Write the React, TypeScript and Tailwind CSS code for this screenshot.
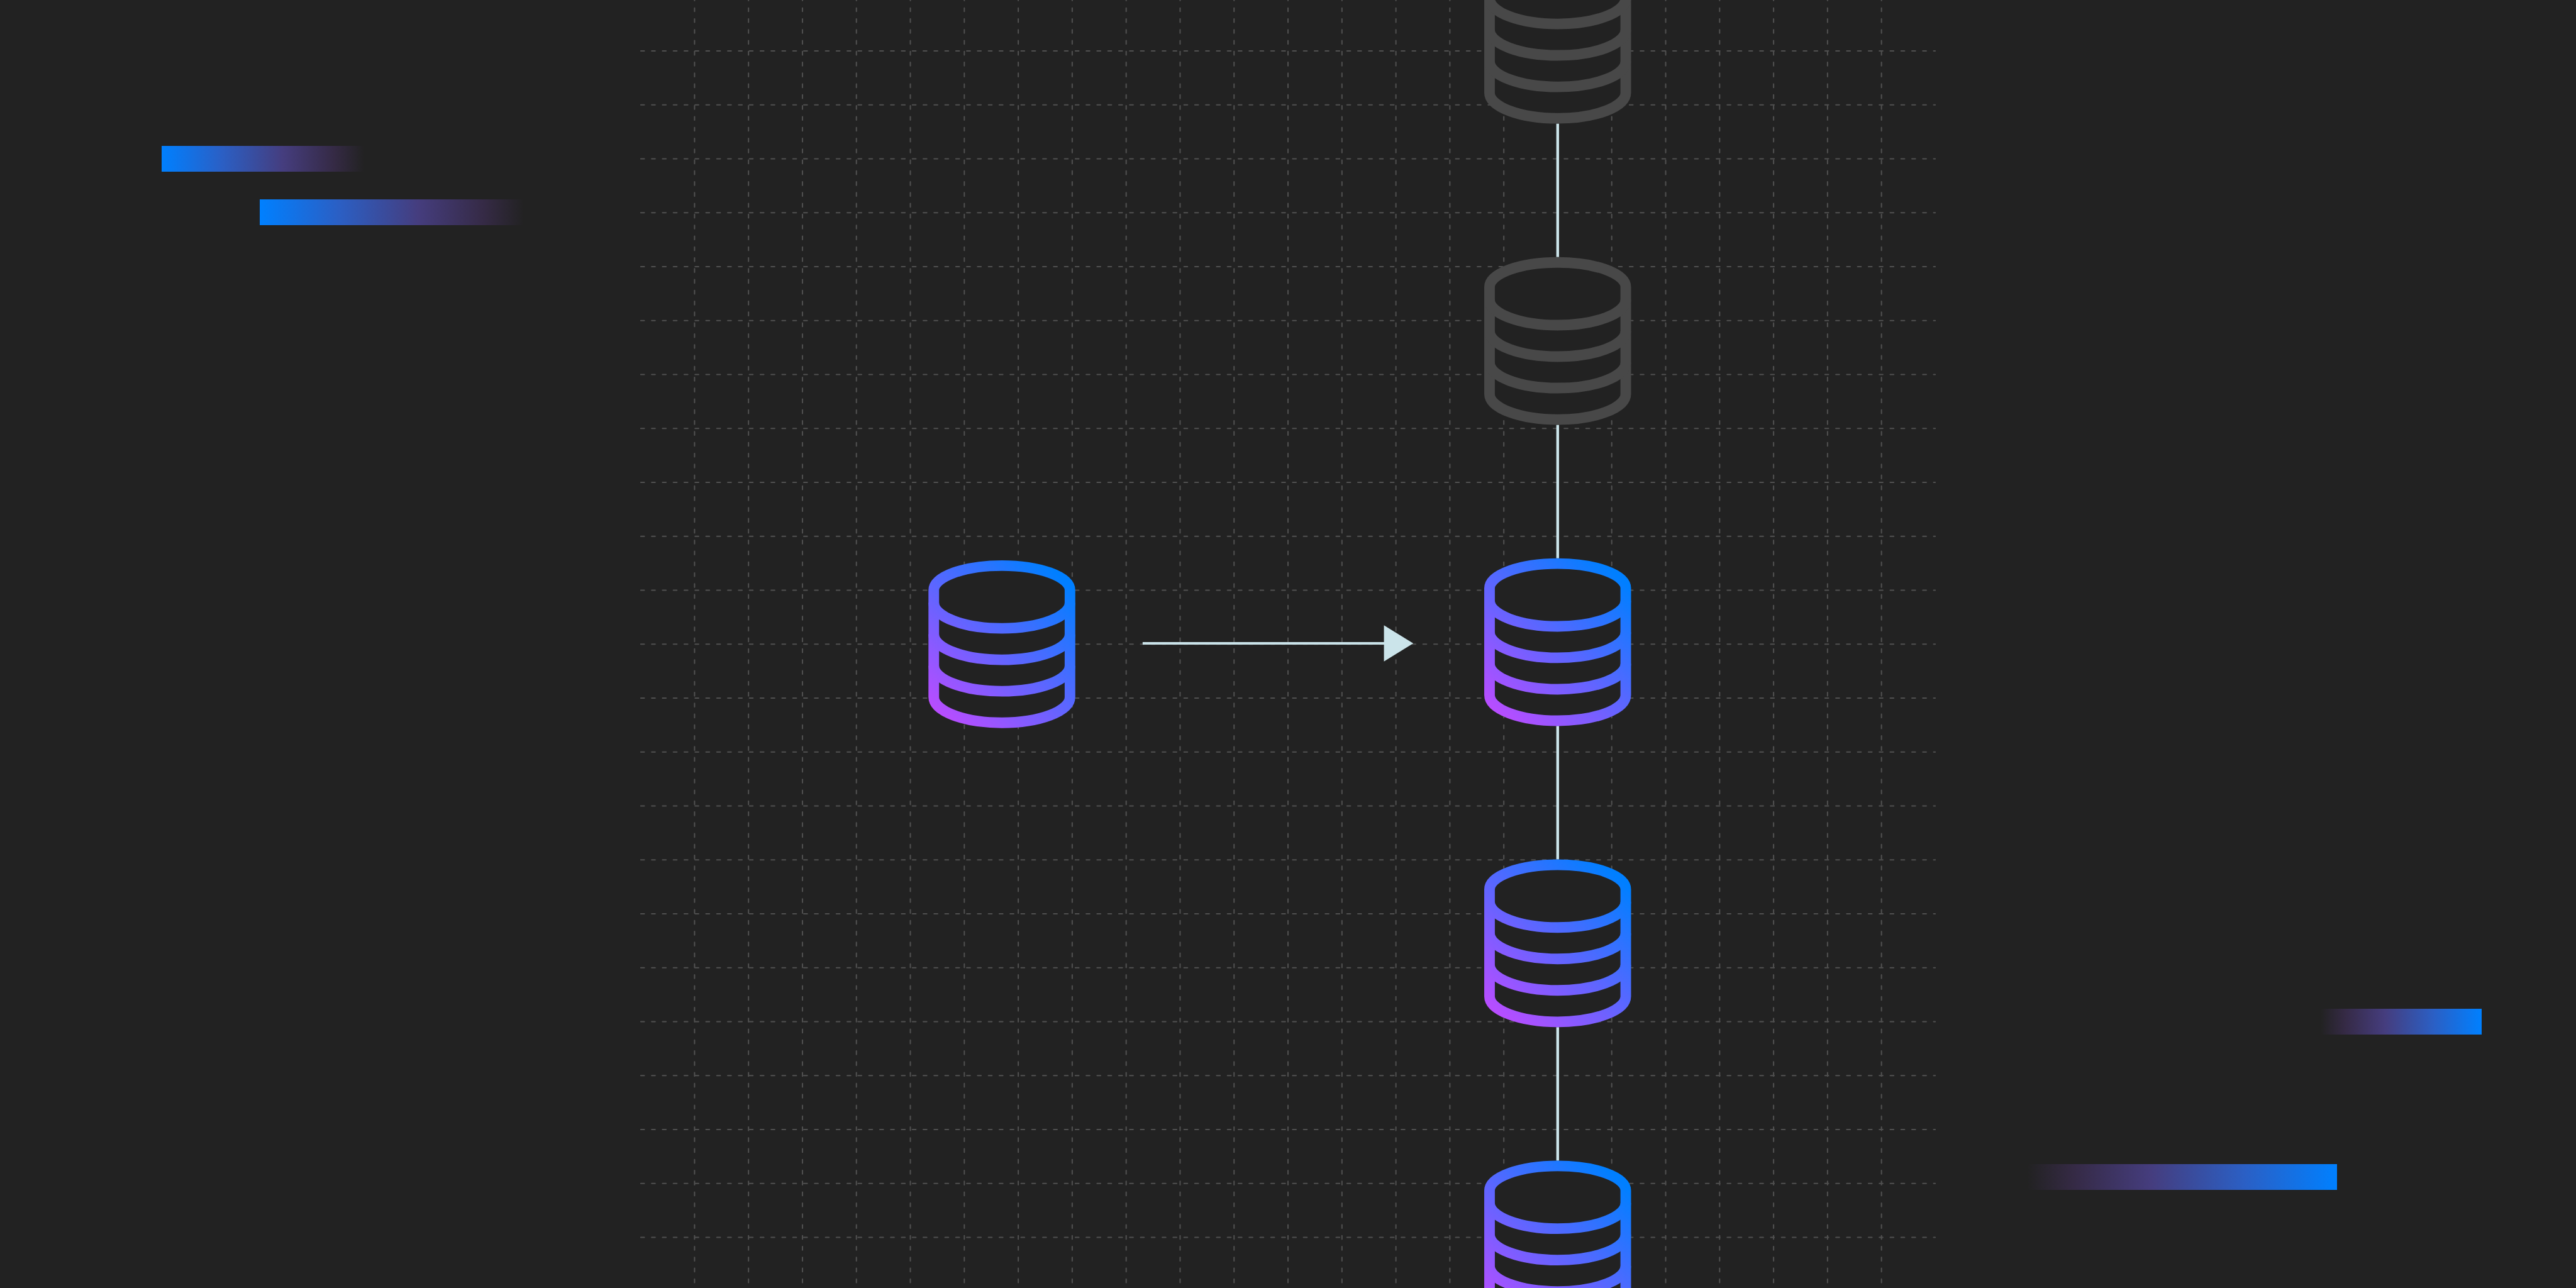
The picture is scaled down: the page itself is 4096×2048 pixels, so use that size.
const rows = Array.from({ length: 23 }, (_, i) => 158.3 + 167.47 * i);
const cols = Array.from({ length: 23 }, (_, i) => 2157 + 167.55 * i);

// tops of the stack in the right column, in reference px
const stackTops = [-137, 798.5, 1733.8, 2669, 3604.3];
const links = [
  [384, 798.5],
  [1319.3, 1733.8],
  [2254.6, 2669],
  [3190, 3604.3],
];

function Database({ x, y, muted }: { x: number; y: number; muted?: boolean }) {
  const stroke = muted ? "#484848" : "url(#db-gradient)";
  return (
    <g transform={`translate(${x} ${y})`} stroke={stroke} strokeWidth={33} fill="none">
      <path
        fill="#222222"
        d="M16.5 93A211.5 76.5 0 0 1 439.5 93V425A211.5 79.5 0 0 1 16.5 425Z"
      />
      <path d="M16.5 132A211.5 79.4 0 0 0 439.5 132" />
      <path d="M16.5 230A211.5 79 0 0 0 439.5 230" />
      <path d="M16.5 327.7A211.5 79 0 0 0 439.5 327.7" />
    </g>
  );
}

function Diagram() {
  return (
    <svg viewBox="0 0 8000 4000" className="absolute inset-0 w-[4096px] h-[2048px]">
      <defs>
        <linearGradient id="db-gradient" gradientUnits="userSpaceOnUse" x1="50" y1="490" x2="430" y2="70">
          <stop offset="0" stopColor="#b84dff" />
          <stop offset="1" stopColor="#007fff" />
        </linearGradient>
      </defs>

      {/* Grid */}
      <g stroke="#505050" strokeWidth={4} strokeLinecap="round" strokeDasharray="11 22.74">
        {rows.map((y) => (
          <line key={y} x1={1990} y1={y} x2={6010} y2={y} />
        ))}
        {cols.map((x) => (
          <line key={x} x1={x} y1={-9} x2={x} y2={4020} />
        ))}
      </g>

      {/* Connectors */}
      {links.map(([from, to]) => (
        <line key={from} x1={4837.5} y1={from} x2={4837.5} y2={to} stroke="#cbe4ea" strokeWidth={8.5} />
      ))}
      <rect x={3548.5} y={1994} width={760} height={8} fill="#cbe4ea" />
      <polygon points="4298,1942 4389,1998 4298,2054" fill="#cbe4ea" />

      {/* Nodes */}
      <Database x={2883.4} y={1740} />
      {stackTops.map((y, i) => (
        <Database key={y} x={4609.4} y={y} muted={i < 2} />
      ))}
    </svg>
  );
}

export default function App() {
  return (
    <div className="relative flex justify-between w-[4096px] h-[2048px] overflow-hidden bg-[#222222]">
      <Diagram />

      {/* Bars, left */}
      <div className="relative flex flex-col items-start gap-[44px] pl-[257px] pt-[232px]">
        <div className="w-[322px] h-[41px] bg-[linear-gradient(90deg,#0080ff_0%,#2b5fc4_30%,#453d7e_60%,#352a45_85%,#222222_100%)]" />
        <div className="ml-[156px] w-[420px] h-[41px] bg-[linear-gradient(90deg,#0080ff_0%,#2b5fc4_30%,#453d7e_60%,#352a45_85%,#222222_100%)]" />
      </div>

      {/* Bars, right */}
      <div className="relative flex flex-col items-end justify-end gap-[206px] pr-[150px] pb-[156px]">
        <div className="w-[256px] h-[41px] bg-[linear-gradient(270deg,#0080ff_0%,#2b5fc4_30%,#453d7e_60%,#352a45_85%,#222222_100%)]" />
        <div className="mr-[230px] w-[492px] h-[41px] bg-[linear-gradient(270deg,#0080ff_0%,#2b5fc4_30%,#453d7e_60%,#352a45_85%,#222222_100%)]" />
      </div>
    </div>
  );
}
